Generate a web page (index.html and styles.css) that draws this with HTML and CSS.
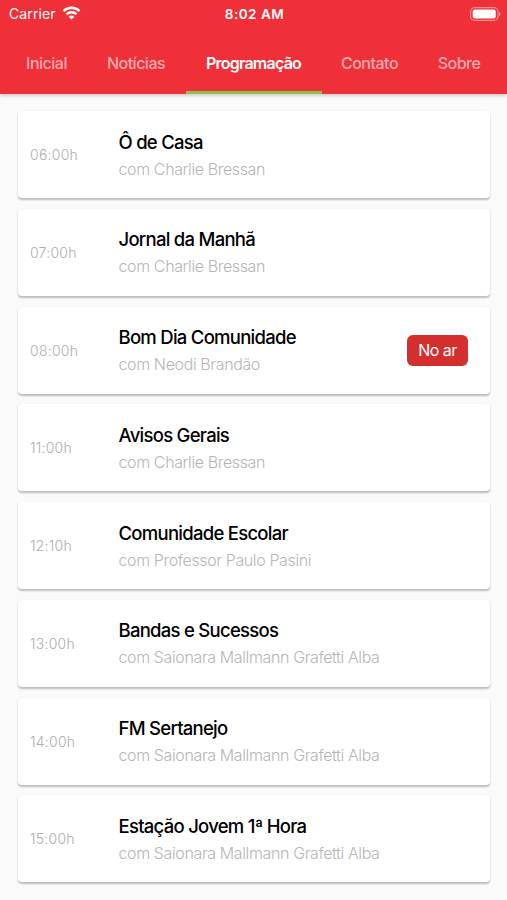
FILE: index.html
```html
<!DOCTYPE html>
<html lang="pt-BR">
<head>
    <meta charset="UTF-8">
    <meta name="viewport" content="width=device-width, initial-scale=1.0">
    <title>Programação</title>
    <link rel="stylesheet" href="styles.css">
</head>
<body>
    <header class="header">
        <div class="status-bar">
            <div class="carrier">
                <span>Carrier</span>
                <svg class="wifi" width="19" height="14" viewBox="0 0 18 14" fill="none" stroke="#fff" stroke-width="2.5">
                    <path d="M1 5.1C5.5 .7 12.5 .7 17 5.1"/>
                    <path d="M4 8.3c2.8-2.7 7.2-2.7 10 0"/>
                    <path d="M9 13.6 6.1 10.7c1.6-1.5 4.2-1.5 5.8 0z" fill="#fff" stroke="none"/>
                </svg>
            </div>
            <span class="clock">8:02 AM</span>
            <svg class="battery" width="31" height="14" viewBox="0 0 31 14">
                <rect x=".6" y=".6" width="27.4" height="12.8" rx="4" fill="none" stroke="#fff" stroke-opacity=".45" stroke-width="1.1"/>
                <rect x="2.7" y="2.4" width="23" height="9.2" rx="2" fill="#fff"/>
                <path d="M29 4.7c2 .8 2 3.8 0 4.6z" fill="#fff" fill-opacity=".5"/>
            </svg>
        </div>
        <nav class="tabs">
            <a class="tab">Inicial</a>
            <a class="tab">Notícias</a>
            <a class="tab active">Programação</a>
            <a class="tab">Contato</a>
            <a class="tab">Sobre</a>
        </nav>
    </header>

    <main class="schedule">
        <article class="card">
            <time class="time">06:00h</time>
            <div class="info">
                <h2>Ô de Casa</h2>
                <p>com Charlie Bressan</p>
            </div>
        </article>
        <article class="card">
            <time class="time">07:00h</time>
            <div class="info">
                <h2>Jornal da Manhã</h2>
                <p>com Charlie Bressan</p>
            </div>
        </article>
        <article class="card">
            <time class="time">08:00h</time>
            <div class="info">
                <h2>Bom Dia Comunidade</h2>
                <p>com Neodi Brandão</p>
            </div>
            <span class="on-air">No ar</span>
        </article>
        <article class="card">
            <time class="time">11:00h</time>
            <div class="info">
                <h2>Avisos Gerais</h2>
                <p>com Charlie Bressan</p>
            </div>
        </article>
        <article class="card">
            <time class="time">12:10h</time>
            <div class="info">
                <h2>Comunidade Escolar</h2>
                <p>com Professor Paulo Pasini</p>
            </div>
        </article>
        <article class="card">
            <time class="time">13:00h</time>
            <div class="info">
                <h2>Bandas e Sucessos</h2>
                <p>com Saionara Mallmann Grafetti Alba</p>
            </div>
        </article>
        <article class="card">
            <time class="time">14:00h</time>
            <div class="info">
                <h2>FM Sertanejo</h2>
                <p>com Saionara Mallmann Grafetti Alba</p>
            </div>
        </article>
        <article class="card">
            <time class="time">15:00h</time>
            <div class="info">
                <h2>Estação Jovem 1ª Hora</h2>
                <p>com Saionara Mallmann Grafetti Alba</p>
            </div>
        </article>
    </main>
</body>
</html>
```
FILE: styles.css
```css
* {
    margin: 0;
    padding: 0;
    box-sizing: border-box;
}

body {
    font-family: Inter, "Liberation Sans", sans-serif;
    background: #fafafa;
    height: 900px;
    overflow: hidden;
}

.header {
    height: 94px;
    background: #ef3038;
    color: #fff;
    box-shadow: 0 1px 4px rgba(0, 0, 0, 0.25);
}

/* Status bar */
.status-bar {
    display: grid;
    grid-template-columns: 1fr auto 1fr;
    align-items: center;
    height: 28px;
    padding: 0 6px 0 9px;
    font-size: 14px;
    line-height: 28px;
}

.carrier {
    display: flex;
    align-items: center;
    gap: 6px;
    letter-spacing: 0.1px;
}

.wifi {
    margin-bottom: 2px;
}

.clock {
    font-size: 13.5px;
    font-weight: 600;
    letter-spacing: 0.5px;
    margin-right: 1px;
}

.battery {
    justify-self: end;
    margin-bottom: 1px;
}

/* Tabs */
.tabs {
    display: grid;
    grid-template-columns: 80px 99px 136px 96px 83px;
    justify-content: center;
    height: 66px;
}

.tab {
    padding-top: 25px;
    text-align: center;
    font-size: 16px;
    font-weight: 500;
    line-height: 20px;
    letter-spacing: -0.5px;
    color: rgba(255, 255, 255, 0.6);
    border-bottom: 3px solid transparent;
}

.tab.active {
    color: #fff;
    font-weight: 600;
    letter-spacing: -0.75px;
    border-bottom-color: #8bc34a;
}

/* Programme list */
.schedule {
    display: flex;
    flex-direction: column;
    gap: 10.75px;
    padding: 17px 17px 0 18px;
}

.card {
    display: flex;
    align-items: center;
    height: 87px;
    padding: 0 22px 0 12px;
    background: #fff;
    border-radius: 4px;
    box-shadow: 0 1.5px 2px rgba(0, 0, 0, 0.25);
}

.time {
    width: 88.5px;
    font-size: 14px;
    font-weight: 300;
    letter-spacing: 0.25px;
    color: #adadad;
}

.info {
    flex: 1;
    padding-top: 1.5px;
}

.info h2 {
    font-size: 18.5px;
    font-weight: 500;
    line-height: 28px;
    letter-spacing: -0.73px;
    color: #000;
}

.info p {
    font-size: 16px;
    font-weight: 300;
    line-height: 27.5px;
    letter-spacing: -0.38px;
    color: #b5b5b5;
}

.on-air {
    width: 61px;
    height: 31px;
    border-radius: 6px;
    background: #d32f2f;
    color: #fff;
    font-size: 16px;
    line-height: 31px;
    letter-spacing: -0.5px;
    text-align: center;
}
```
